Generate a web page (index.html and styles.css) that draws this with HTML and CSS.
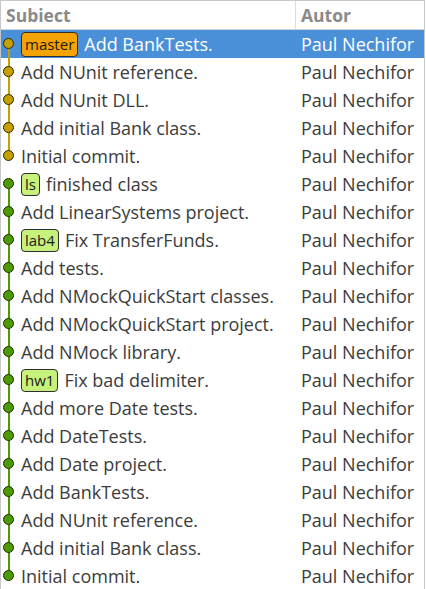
FILE: index.html
```html
<!DOCTYPE html>
<html>
<head>
<meta charset="utf-8">
<link rel="stylesheet" href="styles.css">
</head>
<body>
<div class="view">
  <div class="head">
    <div class="hc subj">Subiect</div>
    <div class="hc auth">Autor</div>
  </div>
  <div class="row sel"><div class="g y bot"><span class="dot"></span></div><div class="subj"><span class="tag orange">master</span>Add BankTests.</div><div class="auth">Paul Nechifor</div></div>
  <div class="row"><div class="g y top bot"><span class="dot"></span></div><div class="subj">Add NUnit reference.</div><div class="auth">Paul Nechifor</div></div>
  <div class="row"><div class="g y top bot"><span class="dot"></span></div><div class="subj">Add NUnit DLL.</div><div class="auth">Paul Nechifor</div></div>
  <div class="row"><div class="g y top bot"><span class="dot"></span></div><div class="subj">Add initial Bank class.</div><div class="auth">Paul Nechifor</div></div>
  <div class="row"><div class="g y top"><span class="dot"></span></div><div class="subj">Initial commit.</div><div class="auth">Paul Nechifor</div></div>
  <div class="row"><div class="g gr bot"><span class="dot"></span></div><div class="subj"><span class="tag lime">ls</span>finished class</div><div class="auth">Paul Nechifor</div></div>
  <div class="row"><div class="g gr top bot"><span class="dot"></span></div><div class="subj">Add LinearSystems project.</div><div class="auth">Paul Nechifor</div></div>
  <div class="row"><div class="g gr top bot"><span class="dot"></span></div><div class="subj"><span class="tag lime">lab4</span>Fix TransferFunds.</div><div class="auth">Paul Nechifor</div></div>
  <div class="row"><div class="g gr top bot"><span class="dot"></span></div><div class="subj">Add tests.</div><div class="auth">Paul Nechifor</div></div>
  <div class="row"><div class="g gr top bot"><span class="dot"></span></div><div class="subj">Add NMockQuickStart classes.</div><div class="auth">Paul Nechifor</div></div>
  <div class="row"><div class="g gr top bot"><span class="dot"></span></div><div class="subj">Add NMockQuickStart project.</div><div class="auth">Paul Nechifor</div></div>
  <div class="row"><div class="g gr top bot"><span class="dot"></span></div><div class="subj">Add NMock library.</div><div class="auth">Paul Nechifor</div></div>
  <div class="row"><div class="g gr top bot"><span class="dot"></span></div><div class="subj"><span class="tag lime">hw1</span>Fix bad delimiter.</div><div class="auth">Paul Nechifor</div></div>
  <div class="row"><div class="g gr top bot"><span class="dot"></span></div><div class="subj">Add more Date tests.</div><div class="auth">Paul Nechifor</div></div>
  <div class="row"><div class="g gr top bot"><span class="dot"></span></div><div class="subj">Add DateTests.</div><div class="auth">Paul Nechifor</div></div>
  <div class="row"><div class="g gr top bot"><span class="dot"></span></div><div class="subj">Add Date project.</div><div class="auth">Paul Nechifor</div></div>
  <div class="row"><div class="g gr top bot"><span class="dot"></span></div><div class="subj">Add BankTests.</div><div class="auth">Paul Nechifor</div></div>
  <div class="row"><div class="g gr top bot"><span class="dot"></span></div><div class="subj">Add NUnit reference.</div><div class="auth">Paul Nechifor</div></div>
  <div class="row"><div class="g gr top bot"><span class="dot"></span></div><div class="subj">Add initial Bank class.</div><div class="auth">Paul Nechifor</div></div>
  <div class="row"><div class="g gr top"><span class="dot"></span></div><div class="subj">Initial commit.</div><div class="auth">Paul Nechifor</div></div>
</div>
</body>
</html>
```
FILE: styles.css
```css
html, body {
  margin: 0;
  padding: 0;
  background: #ffffff;
  overflow: hidden;
}
body {
  font-family: "Open Sans", "Noto Sans", sans-serif;
  font-size: 18px;
  color: #3c3c3c;
}
.view {
  width: 423px;
  height: 589px;
  border-left: 1px solid #c8c8c8;
  border-top: 1px solid #c8c8c8;
  border-right: 1px solid #c8c8c8;
  overflow: hidden;
}
.head {
  display: flex;
  height: 28px;
  border-bottom: 1px solid #d6d6d6;
}
.hc {
  font-weight: bold;
  font-size: 17.5px;
  color: #8a8a8a;
  display: flex;
  align-items: center;
}
.head .subj {
  width: 289px;
  padding-left: 5px;
  border-right: 1px solid #dcdcdc;
}
.head .auth {
  padding-left: 5px;
}
.row {
  display: flex;
  align-items: center;
  height: 28px;
}
.row.sel {
  background: #4a90d9;
  color: #ffffff;
}
.g {
  position: relative;
  width: 20px;
  height: 28px;
  flex: none;
}
.g.top::before, .g.bot::after {
  content: "";
  position: absolute;
  left: 7px;
  width: 2px;
  height: 14px;
}
.g.top::before { top: 0; }
.g.bot::after { top: 14px; }
.g.y::before, .g.y::after { background: #c4a000; }
.g.gr::before, .g.gr::after { background: #4e9a06; }
.dot {
  position: absolute;
  left: 2px;
  top: 8px;
  width: 9px;
  height: 9px;
  border-radius: 50%;
  border: 1.5px solid #2e2600;
  background: #c4a000;
  z-index: 1;
}
.g.gr .dot {
  border-color: #183200;
  background: #4e9a06;
}
.row .subj {
  width: 275px;
  display: flex;
  align-items: center;
  white-space: nowrap;
  overflow: hidden;
}
.row .auth {
  padding-left: 5px;
  white-space: nowrap;
}
.tag {
  display: inline-flex;
  align-items: center;
  height: 23px;
  padding: 0 3px;
  border: 1px solid #2e2e2e;
  border-radius: 4px;
  font-size: 15px;
  color: #1a1a1a;
  margin-right: 6px;
  box-sizing: border-box;
}
.tag.orange { background: #f5a300; height: 25px; }
.tag.lime { background: #c6f27c; }
```
